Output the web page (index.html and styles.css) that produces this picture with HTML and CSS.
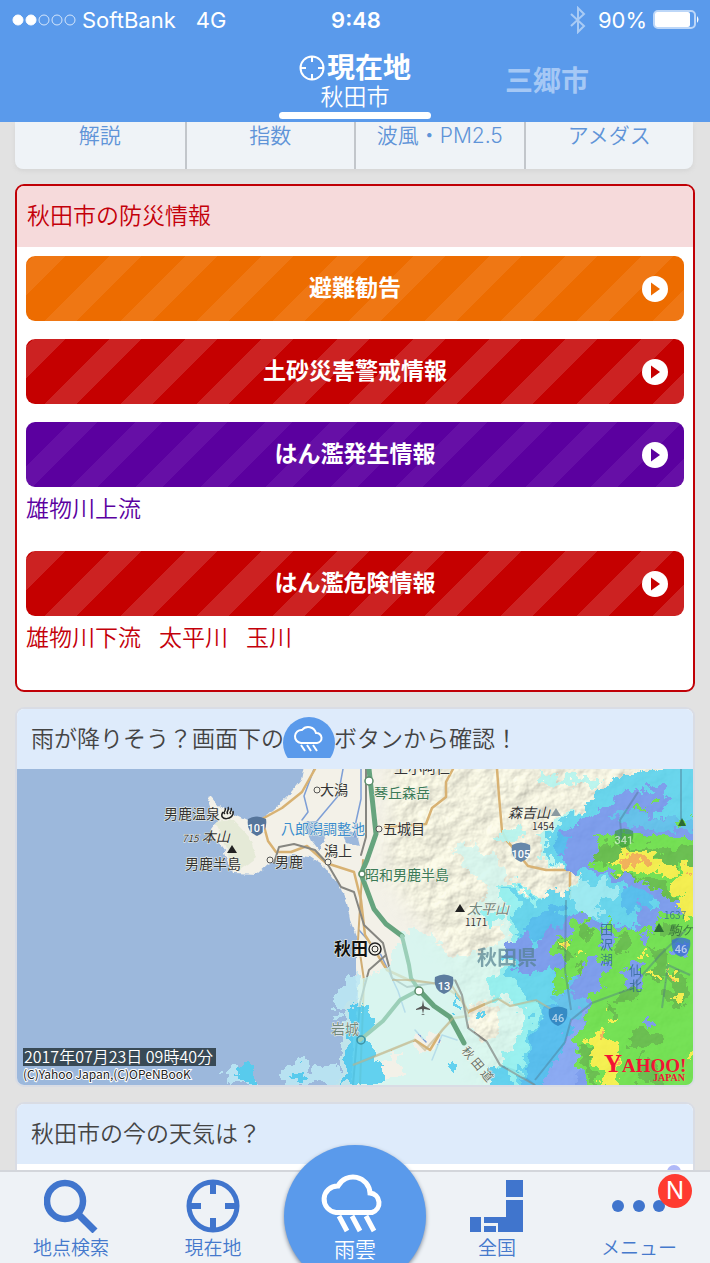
FILE: index.html
```html
<!DOCTYPE html>
<html lang="ja">
<head>
<meta charset="utf-8">
<meta name="viewport" content="width=device-width, initial-scale=1">
<title>天気・防災</title>
<link rel="stylesheet" href="styles.css">
</head>
<body>
<header class="top">
  <div class="status">
    <div class="status-left">
      <svg class="signal" viewBox="0 0 64 12" aria-hidden="true"><g stroke="#fff"><circle cx="6" cy="6" r="5" fill="#fff"/><circle cx="19" cy="6" r="5" fill="#fff"/><g fill="none" opacity=".75"><circle cx="32" cy="6" r="5"/><circle cx="45" cy="6" r="5"/><circle cx="58" cy="6" r="5"/></g></g></svg>
      <span>SoftBank</span><span class="network">4G</span>
    </div>
    <div class="clock">9:48</div>
    <div class="status-right">
      <svg class="bluetooth" viewBox="0 0 16 28" fill="none" stroke="#a9cbf5" stroke-width="2" aria-hidden="true"><path d="M1 8 14 20 8 26V2l6 6L1 20"/></svg>
      <span>90%</span>
      <svg class="battery" viewBox="0 0 47 20" aria-hidden="true"><rect x="1" y="1" width="41" height="17" rx="4" fill="none" stroke="#bdd7f8" stroke-width="2"/><rect x="2" y="2" width="35" height="15" rx="2" fill="#fff"/><path d="M44 6q3 3.500 0 7z" fill="#fff"/></svg>
    </div>
  </div>
  <nav class="places" aria-label="地点">
    <a class="place place-current" href="#here">
      <span class="place-name"><svg class="locate" viewBox="0 0 26 26" fill="none" stroke="#fff" stroke-width="2" aria-hidden="true"><circle cx="13" cy="13" r="11.500"/><path d="M13 2v5M13 19v5M2 13h5M19 13h5"/></svg>現在地</span>
      <span class="place-city">秋田市</span>
    </a>
    <a class="place place-next" href="#misato">三郷市</a>
  </nav>
</header>

<main class="content">
  <nav class="tabs" aria-label="詳細">
    <a href="#commentary">解説</a><a href="#index">指数</a><a href="#wave">波風・PM2.5</a><a href="#amedas">アメダス</a>
  </nav>

  <section class="card card-alert">
    <h2 class="card-title">秋田市の防災情報</h2>
    <div class="alerts">
      <div><button class="alert orange" type="button"><span class="alert-text">避難勧告</span><svg class="go" viewBox="0 0 26 26" aria-hidden="true"><circle cx="13" cy="13" r="13" fill="#fff"/><path d="M9 6.500 18 13l-9 6.500z" fill="currentColor"/></svg></button></div>
      <div><button class="alert red" type="button"><span class="alert-text">土砂災害警戒情報</span><svg class="go" viewBox="0 0 26 26" aria-hidden="true"><circle cx="13" cy="13" r="13" fill="#fff"/><path d="M9 6.500 18 13l-9 6.500z" fill="currentColor"/></svg></button></div>
      <div><button class="alert purple" type="button"><span class="alert-text">はん濫発生情報</span><svg class="go" viewBox="0 0 26 26" aria-hidden="true"><circle cx="13" cy="13" r="13" fill="#fff"/><path d="M9 6.500 18 13l-9 6.500z" fill="currentColor"/></svg></button>
        <p class="rivers rivers-purple"><span>雄物川上流</span></p></div>
      <div><button class="alert red" type="button"><span class="alert-text">はん濫危険情報</span><svg class="go" viewBox="0 0 26 26" aria-hidden="true"><circle cx="13" cy="13" r="13" fill="#fff"/><path d="M9 6.500 18 13l-9 6.500z" fill="currentColor"/></svg></button>
        <p class="rivers"><span>雄物川下流</span><span>太平川</span><span>玉川</span></p></div>
    </div>
  </section>

  <section class="card">
    <h2 class="card-title"><span>雨が降りそう？画面下の</span><svg class="rain-badge" viewBox="281 717 52 41" role="img" aria-label="雨雲"><circle cx="307" cy="743" r="26" fill="#5a9aeb"/><g fill="none" stroke="#fff" stroke-width="2"><path d="M299 743a6.500 6.500 0 0 1 1-13 8 8 0 0 1 14 3 5 5 0 0 1 1 10z"/><path d="m299 745 4 6m2-6 4 6m2-6 4 6"/></g></svg><span>ボタンから確認！</span></h2>
    <svg class="map" viewBox="17 769 676 316" role="img" aria-label="秋田県の雨雲レーダー">
      <defs>
        <filter id="ragged" x="-5%" y="-5%" width="110%" height="110%" color-interpolation-filters="sRGB"><feTurbulence type="fractalNoise" baseFrequency=".09" numOctaves="3" seed="7"/><feDisplacementMap in="SourceGraphic" scale="22" xChannelSelector="R" yChannelSelector="G"/></filter>
        <filter id="coast" x="-5%" y="-5%" width="110%" height="110%" color-interpolation-filters="sRGB"><feTurbulence type="fractalNoise" baseFrequency=".15" numOctaves="2" seed="3"/><feDisplacementMap in="SourceGraphic" scale="5" xChannelSelector="R" yChannelSelector="G"/></filter>
        <filter id="relief" x="-5%" y="-5%" width="110%" height="110%" color-interpolation-filters="sRGB"><feTurbulence type="fractalNoise" baseFrequency=".05" numOctaves="5" seed="12" result="n"/><feDiffuseLighting in="n" lighting-color="#ecebd6" surfaceScale="2" diffuseConstant="1.150" result="lit"><feDistantLight azimuth="225" elevation="62"/></feDiffuseLighting><feGaussianBlur in="SourceAlpha" stdDeviation="10" result="soft"/><feComposite in="lit" in2="soft" operator="in"/></filter>
        <g id="shield"><path d="M-9-8q9-5 18 0 2 13-9 17-11-4-9-17z"/></g>
      </defs>
      <rect x="17" y="769" width="676" height="316" fill="#9cb8dc"/>
      <g filter="url(#coast)">
        <path fill="#f3f1e8" d="M305 760 301 780 287 797 273 810 262 818 248 820 233 813 220 807 210 796 208 802 212 813 218 820 211 829 215 840 223 847 228 860 233 873 257 874 268 864 277 860 293 855 310 857 325 867 340 887 347 903 350 920 356 936 356 967 358 1007 353 1040 352 1095H710V760z"/>
        <path fill="#e5ead7" d="M215 822 233 820 250 838 256 858 240 870 230 862 226 846z"/>
        <path fill="#9cb8dc" d="M303 822 318 821 326 837 319 850 312 841zM340 829l17 4 3 13-14-4z"/>
      </g>
      <path fill="#eceddb" opacity=".75" filter="url(#relief)" d="M390 760H700V1090H480L450 960 410 910 385 870z"/>
      <g fill="none" stroke-linejoin="round" stroke-linecap="round">
        <g stroke="#7e9fd6" stroke-width="1.500"><path d="M314 769 304 796 308 812 302 820M361 769v30l-6 27v11M343 769 338 796 317 821M359 930 381 955 398 991 405 1012M415 1030l11 12M432 1060l10-25 15 5"/></g>
        <g stroke="#d8b273" stroke-width="2.500"><path d="M315 769 302 792 282 808 262 819 268 841 276 852 291 852 307 846 326 863 354 872 361 900 365 935 387 970 411 981 440 984 463 999 468 1016 454 1018 442 1030 430 1050 415 1040 383 1053 353 1065M453 769 446 782V797L432 808 426 824 385 827M497 769l2 27 3 35 5 10 8 9 13 16 18 4h22M570 873v24M468 1012 498 998 510 1006 536 1001 555 1012"/></g>
        <path d="M363 860 358 940 364 980 360 1085" stroke="#d0ad74" stroke-width="2"/>
        <g stroke="#868681" stroke-width="2"><path d="M366 769v68l-5 18M274 863 279 847 294 844 315 850 327 863 341 887 354 892 364 925 383 943 386 955 392 978 407 987 455 980 462 995 468 1028 487 1042 500 1065 518 1072 535 1085"/><path d="M386 955 369 970 360 1003 353 1085"/></g>
      </g>
      <g filter="url(#ragged)" opacity=".88"><g transform="translate(340 769) scale(.333333)" shape-rendering="crispEdges">
        <path fill="#cef8f3" fill-opacity=".8" fill-rule="evenodd" d="M20 680 60 630 150 600 185 490 270 490 300 530 350 570 430 550 500 500 470 460 410 460 380 430 450 370 400 310 360 280 345 240 400 220 450 260 500 320 570 380 700 500V980H-15L0 830zM380 720 440 690 480 720 470 790 410 810zM100 880 180 850 190 920 110 940zM220 800 300 790 290 850 230 850z"/>
        <path fill="#b4f5ef" d="M600 10 660 20 780 30 760 60 700 40 640 50 610 40zM465 200 540 170 560 190 500 215zM600 190 640 150 740 120 780 60 800 60V300L650 300 600 250zM690 350l60-30 60 20v100l-60 20z"/>
        <path fill="#8cf0f1" d="M430 630 520 590 520 500 490 410 470 340 530 340 600 400V948H470L480 880 520 830 560 760 540 690 470 690zM410 440l60-20 30 15-50 30z"/>
        <path fill="#bce8f5" d="M-165 890-105 865-90 910-20 880 10 948H-180zM-345 900-310 885-260 948H-345zM-40 740l30-20 20 20-40 15zM-20 690 10 640 60 600 55 700 0 710z"/>
        <path fill="#57d2ee" d="M780 60 820 30 880 10 1090-20V980H540L550 860 570 780 600 720 560 690 510 620 495 560 540 500 520 440 540 410 490 350 530 350 590 400 640 360 690 370 740 330 700 310 650 290 610 250 620 190 660 160 720 130 760 90z"/>
        <path fill="#4fcdf0" d="M30 720 90 710 95 760 80 820 130 900 120 948 10 948 20 850zM-325 920l45-40 30 25-20 43zM-150 915l30-20 20 30-20 20zM345 690l12-5 5 30-15 8zM320 890l30-8v30l-25 5zM410 730l20 8-6 18zM455 890l50 20 20 60h-80z"/>
        <path fill="#92e8f3" d="M700 350 760 330 800 340 830 380 770 400 790 440 740 450 700 420z"/>
        <path fill="#45b8ef" d="M570 820 600 730 660 690 730 680 700 800 680 980H550zM640 220 690 180 700 290 670 280zM570 440l90-20 40 20-70 60-90 20zM860 340l80 40-20 60-80-20z"/>
        <path fill="#6f93ee" d="M690 310 660 260 690 210 660 190 740 145 800 115 850 80 900 60 970 50 985 90 940 140 1090 180V520L960 400 900 360 830 340 760 310zM620 490 700 430 760 460 880 470 900 400 1090 440V980H610L640 880 690 800 730 700 660 680 640 600 600 610 540 600 500 570 500 520 560 495 590 540z"/>
        <path fill="#54bcec" d="M820 140 860 110 900 130 960 150 1059 150V190L850 170zM660 590l60 40-30 50-40-10zM620 680l60-10 60 30-30 70z"/>
        <path fill="#7da0f4" d="M700 770 740 710 730 860 700 980H590L640 880z"/>
        <path fill="#64de42" d="M730 285 780 240 760 205 840 205 860 180 890 205 950 200 1090 215V420L1020 400 960 370 880 320 820 310 770 300z"/>
        <path fill="#64de42" fill-rule="evenodd" d="M625 540 660 500 680 510 710 460 740 440 750 490 790 490 810 450 850 480 900 470 940 490 960 440 1090 420V980H790L690 890 720 860 700 810 740 760 750 680 800 650 780 620 820 590 750 560 730 600 680 620 700 660 640 670 650 600 680 580zM785 475 820 475 815 540 780 530zM860 585 905 580 905 650 880 665 850 640zM905 480 935 500 920 545 905 530zM1010 510 1050 520 1040 560 1000 550zM900 755 935 745 940 770 905 775z"/>
        <path fill="#59b83f" d="M745 275 790 230 900 230 1000 240 1090 220V300L1000 290 930 250 830 260 810 290zM820 305 890 320 970 345 1059 410 990 390 900 330zM660 510l30 10 10 40-30 10zM720 465l20-10 10 45-20 20zM820 500l40-5 15 30-30 25zM700 590l30 0-10 25zM940 480l50-20 50 30-50 30zM930 540l60 10-10 60-20 40-40-30 30-30zM820 690l60-40 20 30-50 30zM980 600l40 10 39 60-30 50-60-30 20-40zM870 790l60-10 30 40-60 30-30-20zM720 820l50 30-20 40 30 50-50-20zM890 870l70 10 20 68h-80zM800 700l30 20-10 30z"/>
        <path fill="#64de42" d="M875 110 910 110 918 128 885 122zM942 86h16v16h-16zM1010 155l30-10v30l-20 8zM1045 640l14 10v90l-30-20z"/>
        <path fill="#f4ee3e" d="M815 275 860 245 930 240 945 265 1000 285 1015 320 990 330 940 300 850 315zM1030 290 1090 290V450L1040 450 1015 420 1020 370 1000 370zM745 815 790 770 815 800 835 840 835 960H800L770 890 750 860zM795 745 828 738 828 758 805 768zM662 515 694 525 686 548zM715 548h18v10h-18zM905 548h18v10h-18zM920 608 968 615 962 634zM986 592 1014 620 1005 642zM992 682 1028 672 1028 698 1000 692zM1035 850 1059 850V870z"/>
        <path fill="#f2aa4b" d="M840 275 870 255 920 255 932 275 890 290 850 302zM788 775 806 790 798 805zM992 602l12 18-6 14zM1040 300l15 8-5 14zM815 880l14 10-8 16zM672 522l14 6-4 10z"/>
      </g></g>
      <g fill="none" stroke="#66a47e" stroke-width="5" stroke-linejoin="round" stroke-linecap="round">
        <path d="M369 769 376 834 367 860 361 874 374 909 386 924 402 936"/><path d="M402 936 409 965 411 978 419 990 400 1000 383 1021 360 1040" stroke="#9bcfb8" stroke-width="4"/><path d="M419 990 434 1006 450 1017 464 1043"/>
      </g>
      <g fill="none" stroke="#4b7186" stroke-opacity=".4" stroke-width="2"><path d="M535 1080 565 1042 571 1020 592 1003 630 989 660 955 686 930M638 792 620 820 622 842M681 769v52M571 1010 565 970 566 900M690 975 668 965 662 1008"/></g>
      <g fill="none" stroke="#c3b489" stroke-opacity=".6" stroke-width="2"><path d="M392 980h20l40 6 16 25 30-12 12 7 26-6 20 12M383 1053l32-13 10 10 28-32M353 1065l30-12"/><path d="m455 980 7 15 6 33 19 14 13 23 35 20" stroke="#868681"/></g>
      <g class="map-label">
        <text x="394" y="773">上小阿仁</text><text x="320" y="795">大潟</text><text x="164" y="819">男鹿温泉</text><text x="182" y="842" class="italic"><tspan class="tiny">715</tspan> 本山</text><text x="185" y="869">男鹿半島</text><text x="275" y="867">男鹿</text><text x="324" y="856">潟上</text><text x="383" y="834">五城目</text>
        <text x="374" y="798" class="green-text">琴丘森岳</text><text x="365" y="880" class="green-text">昭和男鹿半島</text><text x="281" y="834" class="lake">八郎潟調整池</text>
        <text x="508" y="818" class="italic">森吉山</text><text x="532" y="830" class="tiny">1454</text><text x="467" y="914" class="faded italic">太平山</text><text x="465" y="926" class="tiny">1171</text>
        <text x="334" y="955" class="city">秋田</text><text x="477" y="965" class="prefecture">秋田県</text><text x="331" y="1034" class="faded">岩城</text>
        <g class="on-rain"><text x="600" y="934">田</text><text x="600" y="949">沢</text><text x="600" y="964">湖</text><text x="629" y="975">仙</text><text x="629" y="990">北</text><text x="668" y="935" class="peak">駒ケ</text><text x="664" y="919" class="tiny">1637</text></g>
        <text transform="translate(461 1051) rotate(50)" class="small">秋 田 道</text>
      </g>
      <path d="m232 845 5 8h-10zM460 904l5 8h-10z" fill="#222"/><path d="m659 923 5 9h-10zM682 818l4 8h-8z" fill="#2c6a33"/><path d="m556 808 5 8h-10z" fill="#8b9aa0"/>
      <g fill="none" stroke="#222" stroke-width="1.500"><path d="M223 812c-6 9 12 9 10-1M225 814c-3-2 2-3 0-6M228 814c-3-2 2-4 0-7M231 814c-3-2 2-3 0-6"/></g>
      <g fill="#f5f3e8" stroke="#555"><circle cx="317" cy="790" r="3"/><circle cx="270" cy="860" r="3"/><circle cx="328" cy="862" r="3"/><circle cx="379" cy="829" r="3"/></g>
      <g fill="#fff" stroke="#5a8b69" stroke-width="1.500"><circle cx="369" cy="781" r="4"/><circle cx="362" cy="874" r="3"/><circle cx="419" cy="991" r="4"/></g>
      <circle cx="361" cy="1040" r="4" fill="none" stroke="#3c92a5" stroke-width="1.500"/>
      <circle cx="375" cy="949" r="7" fill="#f3f1e8"/><g fill="none" stroke="#222"><circle cx="375" cy="949" r="6" stroke-width="1.500"/><circle cx="375" cy="949" r="3"/></g>
      <path d="m423 1000 1 6 6 3v1l-6-1-1 5 2 1h-4l2-1-1-5-6 1v-1l6-3z" fill="#555"/>
      <g class="route">
        <use href="#shield" x="257" y="827" fill="#56759b"/><text x="257" y="832">101</text>
        <use href="#shield" x="521" y="853" fill="#6688aa"/><text x="521" y="858">105</text>
        <use href="#shield" x="444" y="985" fill="#5d7d9f"/><text x="444" y="990">13</text>
        <use href="#shield" x="558" y="1017" fill="#358ac4"/><text x="558" y="1022" class="route-dim">46</text>
        <use href="#shield" x="681" y="948" fill="#3b70d0" opacity=".8"/><text x="681" y="953" class="route-dim">46</text>
        <use href="#shield" x="624" y="839" fill="#3f9a3f" opacity=".7"/><text x="624" y="844" class="route-dim">341</text>
      </g>
      <rect x="23" y="1048" width="193" height="18" fill="#394a56"/>
      <text class="stamp" x="24" y="1063">2017年07月23日 09時40分</text>
      <text class="credit" x="23" y="1079">(C)Yahoo Japan,(C)OPeNBooK</text>
      <text class="logo" x="604" y="1072"><tspan class="logo-big">Y</tspan>AHOO!</text>
      <text class="logo-sub" x="653" y="1081">JAPAN</text>
    </svg>
  </section>

  <section class="card">
    <h2 class="card-title">秋田市の今の天気は？</h2>
    <div class="poll"><span class="poll-dot"></span></div>
  </section>
</main>

<nav class="bottom" aria-label="メイン">
  <a href="#search"><svg class="nav-icon" viewBox="44 1179 54 54" fill="none" stroke="#4075cd" aria-hidden="true"><circle cx="65" cy="1201" r="18" stroke-width="6.500"/><path d="m78 1214 17 17" stroke-width="7"/></svg>地点検索</a>
  <a href="#here"><svg class="nav-icon" viewBox="185 1179 54 54" fill="none" stroke="#4075cd" aria-hidden="true"><circle cx="212" cy="1206" r="24" stroke-width="5"/><path d="M212 1183v11M212 1218v11M189 1206h11M224 1206h11" stroke-width="6"/></svg>現在地</a>
  <a class="rain" href="#rain"><svg class="nav-icon cloud" viewBox="321 1172 68 62" fill="none" stroke="#fff" stroke-width="5" aria-hidden="true"><path d="M336 1212.500a13.500 13.300 0 0 1 2-26.500 17 17 0 0 1 32 7 10 10 0 0 1 2 19.500z"/><path d="m339 1216 8 15m5-15 8 15m6-15 8 15"/></svg>雨雲</a>
  <a href="#japan"><svg class="nav-icon" viewBox="470 1179 54 54" fill="#4075cd" aria-hidden="true"><path d="M506 1180h17v17h-17zM470 1217h11v15h-11zM484 1217h22v-17h17v32h-25v-9h-14zM484 1226h12v6h-12z"/></svg>全国</a>
  <a href="#menu"><span class="menu-icon"><svg class="nav-icon" viewBox="612 1179 54 54" fill="#4075cd" aria-hidden="true"><circle cx="618" cy="1206" r="6"/><circle cx="639" cy="1206" r="6"/><circle cx="659" cy="1206" r="6"/></svg><span class="new">N</span></span>メニュー</a>
</nav>
</body>
</html>
```
FILE: styles.css
```css
* { box-sizing: border-box; }
body {
  margin: 0;
  height: 100vh;
  overflow: hidden;
  display: flex;
  flex-direction: column;
  background: #e2e2e2;
  color: #444;
  font-family: Inter, "Noto Sans CJK JP", sans-serif;
  font-size: 23px;
  font-weight: 350;
}
a { color: inherit; text-decoration: none; }
h2, p { margin: 0; font-size: inherit; font-weight: inherit; }
svg { display: block; }

/* header */
.top { flex: none; background: #5a9aeb; color: #fff; position: relative; z-index: 1; }
.status { display: grid; grid-template-columns: 1fr auto 1fr; align-items: center; height: 40px; padding: 0 10px 0 12px; font-size: 22px; font-weight: 400; line-height: 40px; }
.status-left, .status-right { display: flex; align-items: center; gap: 6px; }
.status-right { justify-content: flex-end; }
.network { margin-left: 14px; }
.clock { font-weight: 600; }
.signal { width: 64px; }
.bluetooth { width: 16px; margin-right: 6px; }
.battery { width: 47px; }
.places { display: grid; grid-template-columns: 1fr 152px 1fr; height: 82px; }
.place { font-weight: 700; font-size: 28px; }
.place-current { grid-column: 2; display: flex; flex-direction: column; align-items: center; justify-content: flex-end; padding-bottom: 3px; }
.place-current::after { content: ""; width: 100%; height: 7px; border-radius: 4px; background: #fff; }
.place-name { display: flex; align-items: center; line-height: 28px; }
.locate { width: 26px; margin-right: 2px; }
.place-city { font-size: 23px; font-weight: 350; line-height: 30px; }
.place-next { padding-left: 74px; line-height: 82px; color: #a5c8f5; }

/* content */
.content { flex: 1; min-height: 0; overflow: hidden; padding: 0 15px; display: flex; flex-direction: column; gap: 15px; }
.content > * { flex: none; }
.tabs { display: grid; grid-template-columns: repeat(4, 1fr); margin-right: 2px; background: #eff3f7; border-radius: 0 0 8px 8px; box-shadow: 0 2px 4px #d4d4d4; font-size: 21px; color: #5f94d8; text-align: center; }
.tabs a { line-height: 28px; padding-bottom: 19px; }
.tabs a + a { border-left: 2px solid #c2c6cb; }
.card { background: #fff; border: 2px solid #d9dce4; border-radius: 9px; overflow: hidden; }
.card-title { display: flex; align-items: center; height: 60px; padding: 0 14px 5px; background: #deebfb; }
.card-alert { border-color: #c00006; color: #c4000a; }
.card-alert .card-title { height: 61px; padding: 0 10px 5px; background: #f6dadb; }
.alerts { display: flex; flex-direction: column; gap: 18px; padding: 9px 9px 28px; }
.alert {
  display: grid;
  grid-template-columns: 1fr auto 1fr;
  align-items: center;
  width: 100%;
  height: 65px;
  padding: 0 16px;
  border: 0;
  border-radius: 9px;
  font: inherit;
  font-weight: 700;
  background-size: 76px 76px;
  background-image: linear-gradient(135deg, transparent 5%, var(--stripe) 5% 26%, transparent 26% 55%, var(--stripe) 55% 76%, transparent 76%);
}
.alert::before { content: ""; }
.alert-text { color: #fff; padding-bottom: 5px; }
.go { width: 26px; justify-self: end; }
.orange { background-color: #ed6c00; color: #ed6c00; --stripe: #ef7714; }
.red { background-color: #c50000; color: #c50000; --stripe: #cc2222; }
.purple {
  background-color: #5b009f;
  color: #5b009f;
  --stripe: #660fa6;
  background-size: 65px 65px;
  background-image: linear-gradient(135deg, var(--stripe) 5%, transparent 5% 34%, var(--stripe) 34% 55%, transparent 55% 84%, var(--stripe) 84%);
}
.rivers { display: flex; gap: 18px; height: 46px; line-height: 44px; }
.rivers-purple { color: #5b009f; }
.rain-badge { width: 52px; margin: 2px -1px 0; }

/* map */
.map { width: 100%; height: auto; font-family: "Noto Sans CJK JP", sans-serif; font-weight: 400; }
.map-label { font-size: 14px; fill: #333; stroke: #f5f5ea; stroke-width: 1px; paint-order: stroke; }
.map-label .green-text { fill: #3c7a56; }
.map-label .lake { fill: #3b8ccd; }
.map-label .italic { font-style: italic; }
.map-label .tiny { font-size: 10px; }
.map-label .small { font-size: 12px; fill: #64756d; }
.map-label .faded { fill: #71877d; }
.map-label .city { font-size: 17px; font-weight: 700; fill: #111; }
.map-label .prefecture { font-size: 20px; font-weight: 700; fill: #54808f; stroke: none; opacity: .7; }
.map-label .on-rain { font-size: 13px; fill: #275f8a; stroke: none; opacity: .7; }
.map-label .peak { font-size: 13px; font-style: italic; fill: #275a34; }
.route { font: 500 11px Roboto, sans-serif; fill: #fff; text-anchor: middle; }
.route-dim { opacity: .6; }
.stamp { font-size: 16px; font-weight: 350; fill: #fff; }
.credit { font-size: 12px; fill: #222; stroke: #fff; stroke-width: 2px; paint-order: stroke; }
.logo, .logo-sub { font-family: "Liberation Serif", serif; font-weight: 700; fill: #f31334; }
.logo { font-size: 19px; }
.logo-big { font-size: 25px; }
.logo-sub { font-size: 10px; }

.poll { height: 160px; display: flex; justify-content: flex-end; padding: 1px 12px; }
.poll-dot { width: 14px; height: 14px; border-radius: 50%; background: #b0b9f8; }

/* bottom bar */
.bottom { position: relative; flex: none; display: grid; grid-template-columns: repeat(5, 1fr); height: 93px; border-top: 2px solid #d3d6db; background: #eef2f6; color: #4579cc; font-size: 19px; text-align: center; }
.bottom a { display: flex; flex-direction: column; align-items: center; padding-top: 7px; line-height: 32px; }
.nav-icon { width: 54px; height: 54px; }
.bottom .rain { position: relative; z-index: 0; color: #fff; font-size: 21px; padding-top: 0; }
.rain::before { content: ""; position: absolute; z-index: -1; top: -27px; left: 50%; width: 142px; height: 142px; margin-left: -71px; border-radius: 50%; background: #5a9aeb; box-shadow: 0 2px 4px #7f8998; }
.bottom .cloud { width: 68px; height: 62px; }
.menu-icon { position: relative; }
.new { position: absolute; top: -5px; right: -26px; width: 34px; height: 34px; border-radius: 50%; background: #ff3b30; color: #fff; font-size: 24px; font-weight: 400; line-height: 34px; }
```
